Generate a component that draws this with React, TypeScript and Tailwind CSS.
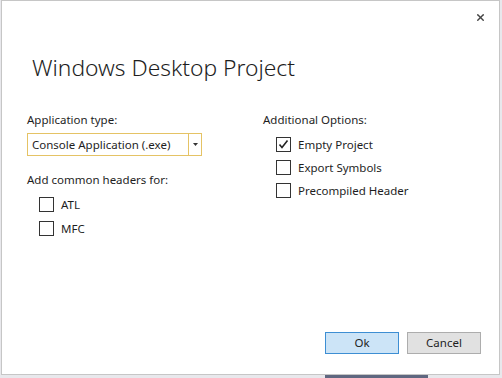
import { X } from 'lucide-react'

const Check = ({ label, checked = false }: { label: string; checked?: boolean }) => (
  <div className="flex items-center h-[15px] gap-[7px]">
    <div className="w-[15px] h-[15px] border border-[#333333] bg-white flex items-center justify-center">
      {checked && (
        <svg width="11" height="11" viewBox="0 0 11 11">
          <path d="M1.5 5.5 L4 8.5 L9.5 1.5" stroke="#222" strokeWidth="1.6" fill="none" />
        </svg>
      )}
    </div>
    <span className="text-[11.5px] leading-none text-[#1e1e1e]">{label}</span>
  </div>
)

export default function App() {
  return (
    <div
      className="w-[502px] h-[378px] bg-[#e8e8ec] flex flex-col"
      style={{ fontFamily: '"Noto Sans", "Open Sans", sans-serif' }}
    >
      {/* Dialog */}
      <div className="ml-[1px] w-[499px] h-[375px] bg-white border border-[#c6c6c6] flex flex-col">
        <div className="flex justify-end pt-[11px] pr-[13px]">
          <X className="w-[11px] h-[11px] text-[#444]" strokeWidth={3} />
        </div>

        <h1 className="ml-[30px] mt-[31px] text-[22.8px] leading-[28px] font-light text-[#1e1e1e]">
          Windows Desktop Project
        </h1>

        <div className="flex mt-[31px]">
          {/* left column */}
          <div className="ml-[25px] w-[236px] flex flex-col">
            <span className="text-[11.5px] leading-[14px] text-[#1e1e1e]">Application type:</span>
            <div className="mt-[6px] w-[175px] h-[23px] border border-[#e5c365] flex">
              <div className="flex-1 flex items-center pl-[4px] text-[11.5px] text-[#1e1e1e]">
                Console Application (.exe)
              </div>
              <div className="w-[13px] border-l border-[#e5c365] flex items-center justify-center">
                <svg width="5" height="3" viewBox="0 0 5 3">
                  <path d="M0 0 H5 L2.5 3 Z" fill="#333" />
                </svg>
              </div>
            </div>
            <span className="mt-[17px] text-[11.5px] leading-[14px] text-[#1e1e1e]">Add common headers for:</span>
            <div className="mt-[10px] ml-[12px] flex flex-col gap-[9px]">
              <Check label="ATL" />
              <Check label="MFC" />
            </div>
          </div>

          {/* right column */}
          <div className="flex flex-col">
            <span className="text-[11.5px] leading-[14px] text-[#1e1e1e]">Additional Options:</span>
            <div className="mt-[10px] ml-[13px] flex flex-col gap-[8px]">
              <Check label="Empty Project" checked />
              <Check label="Export Symbols" />
              <Check label="Precompiled Header" />
            </div>
          </div>
        </div>

        <div className="mt-auto mb-[20px] mr-[18px] flex justify-end gap-[8px]">
          <button className="w-[74px] h-[22px] bg-[#cce4f7] border border-[#3d8ed3] text-[11.5px] text-[#1e1e1e]">
            Ok
          </button>
          <button className="w-[74px] h-[22px] bg-[#e1e1e1] border border-[#adadad] text-[11.5px] text-[#1e1e1e]">
            Cancel
          </button>
        </div>
      </div>
      <div className="ml-[325px] w-[103px] h-[3px] bg-[#5f6780]" />
    </div>
  )
}
